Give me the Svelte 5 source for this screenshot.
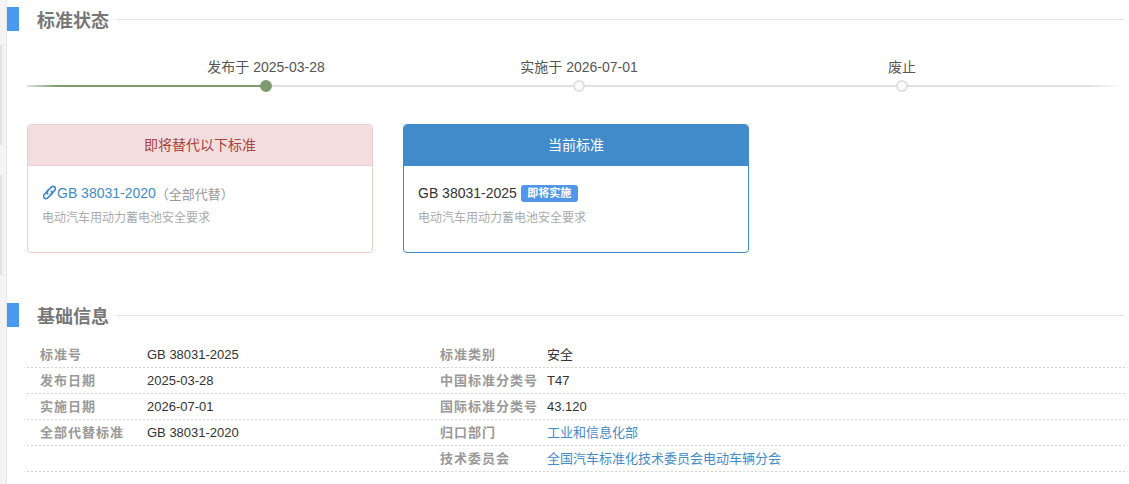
<script>
    // status timeline
    const steps = [
        { label: '发布于 2025-03-28', done: true },
        { label: '实施于 2026-07-01', done: false },
        { label: '废止', done: false }
    ];

    const infoRows = [
        { a: '标准号', b: 'GB 38031-2025', c: '标准类别', d: '安全' },
        { a: '发布日期', b: '2025-03-28', c: '中国标准分类号', d: 'T47' },
        { a: '实施日期', b: '2026-07-01', c: '国际标准分类号', d: '43.120' },
        { a: '全部代替标准', b: 'GB 38031-2020', c: '归口部门', d: '工业和信息化部', link: true },
        { a: '', b: '', c: '技术委员会', d: '全国汽车标准化技术委员会电动车辆分会', link: true }
    ];
</script>

<div class="page">
    <div class="rail"></div>
    <main class="content">
        <div class="section-title">
            <span class="mark"></span>
            <h2>标准状态</h2>
            <span class="rule"></span>
        </div>

        <div class="timeline">
            {#each steps as step}
                <div class="step">
                    <span class="step-label">{step.label}</span>
                    <span class="dot" class:done={step.done}></span>
                </div>
            {/each}
        </div>

        <div class="cards">
            <div class="card danger">
                <div class="card-head">即将替代以下标准</div>
                <div class="card-body">
                    <div class="card-line">
                        <svg class="link-icon" viewBox="1.6 1.2 12.8 13.6" width="13" height="15" fill="none" stroke="#428bca" stroke-width="1.7" stroke-linecap="round">
                            <path d="M6.5 6.2 2.8 10a2.4 2.4 0 0 0 3.4 3.4L9.8 9.8a2.4 2.4 0 0 0 0-3.2" />
                            <path d="M9.5 9.8 13.2 6a2.4 2.4 0 0 0-3.4-3.4L6.2 6.2a2.4 2.4 0 0 0 0 3.2" />
                        </svg><a class="std-link">GB 38031-2020</a><span class="note">（全部代替）</span>
                    </div>
                    <div class="card-desc">电动汽车用动力蓄电池安全要求</div>
                </div>
            </div>

            <div class="card primary">
                <div class="card-head">当前标准</div>
                <div class="card-body">
                    <div class="card-line">
                        GB 38031-2025 <span class="badge">即将实施</span>
                    </div>
                    <div class="card-desc">电动汽车用动力蓄电池安全要求</div>
                </div>
            </div>
        </div>

        <div class="section-title second">
            <span class="mark"></span>
            <h2>基础信息</h2>
            <span class="rule"></span>
        </div>

        <div class="info">
            {#each infoRows as row}
                <div class="info-row">
                    <span class="info-label">{row.a}</span>
                    <span class="info-value">{row.b}</span>
                    <span class="info-label">{row.c}</span>
                    <span class="info-value" class:blue={row.link}>{row.d}</span>
                </div>
            {/each}
        </div>
    </main>
</div>

<style>
    :global(body) {
        margin: 0;
        background: #fff;
        font-family: "Liberation Sans", Arial, "Noto Sans CJK SC", sans-serif;
        font-size: 14px;
        color: #333;
    }

    .page {
        display: flex;
        height: 484px;
        overflow: hidden;
    }

    /* sidebar edge with the shadows of the cards behind it */
    .rail {
        flex: none;
        width: 7px;
        box-sizing: border-box;
        border-right: 1px solid #e6e6e6;
        background:
            linear-gradient(90deg, #dcdcdc, #f4f4f4) 0 45px / 3px 100px no-repeat,
            linear-gradient(90deg, #dcdcdc, #f4f4f4) 0 175px / 3px 100px no-repeat,
            #f4f4f4;
    }

    .content {
        padding-top: 7px;
        width: 1118px;
    }

    .section-title {
        display: flex;
        align-items: center;
        height: 24px;
    }

    .section-title.second {
        margin-top: 50px;
    }

    .mark {
        width: 12px;
        height: 24px;
        background: #4a9bf0;
    }

    h2 {
        margin: 0 8px 0 18px;
        padding-top: 4px;
        font-size: 18px;
        line-height: 24px;
        font-weight: 700;
        color: #777;
    }

    .rule {
        flex: 1;
        height: 1px;
        background: #e5e5e5;
    }

    .timeline {
        display: flex;
        margin: 26px 0 0 20px;
        width: 1098px;
        height: 38px;
        padding-left: 239px;
        box-sizing: border-box;
        gap: 313px;
        background:
            linear-gradient(90deg, transparent 0, #7d9b6f 30px, #7d9b6f 239px, transparent 239px) 0 28px / 100% 2px no-repeat,
            linear-gradient(90deg, #e0e0e0 0, #e0e0e0 1060px, transparent 100%) 0 28px / 100% 2px no-repeat;
    }

    .step {
        width: 0;
        display: flex;
        flex-direction: column;
        align-items: center;
    }

    .step:last-child {
        margin-left: 10px;
    }

    .step-label {
        white-space: nowrap;
        font-size: 14px;
        line-height: 20px;
        color: #555;
    }

    .dot {
        flex: none;
        width: 8px;
        height: 8px;
        margin-top: 3px;
        border: 2px solid #dfdfdf;
        border-radius: 50%;
        background: #fafafa;
    }

    .dot.done {
        border-color: #7d9b6f;
        background: #7d9b6f;
    }

    .cards {
        display: flex;
        gap: 30px;
        margin: 29px 0 0 20px;
    }

    .card {
        width: 346px;
        height: 129px;
        box-sizing: border-box;
        border: 1px solid;
        border-radius: 4px;
        overflow: hidden;
    }

    .card-head {
        height: 41px;
        line-height: 40px;
        text-align: center;
        font-size: 14px;
        box-sizing: border-box;
    }

    .danger {
        border-color: #ebccd1;
    }

    .danger .card-head {
        background: #f2dede;
        color: #a94442;
        border-bottom: 1px solid #ebccd1;
    }

    .primary {
        border-color: #428bca;
    }

    .primary .card-head {
        background: #428bca;
        color: #fff;
    }

    .card-body {
        padding: 17px 14px 0 14px;
    }

    .card-line {
        display: flex;
        align-items: center;
        height: 20px;
        white-space: pre;
        color: #333;
    }

    .link-icon {
        flex: none;
        margin: -1px 1px 0 1px;
    }

    .std-link {
        color: #428bca;
    }

    .note {
        color: #999;
        font-size: 13px;
    }

    .badge {
        padding: 0 6.5px;
        height: 17px;
        line-height: 17px;
        font-size: 11px;
        font-weight: 700;
        color: #fff;
        background: #5296ea;
        border-radius: 3px;
    }

    .card-desc {
        margin-top: 5px;
        font-size: 12px;
        line-height: 20px;
        color: #aaa;
    }

    .info {
        margin: 15px 0 0 20px;
        width: 1098px;
    }

    .info-row {
        display: grid;
        grid-template-columns: 120px 280px 120px 1fr;
        height: 26px;
        box-sizing: border-box;
        background: linear-gradient(90deg, #d2d2d2 50%, transparent 50%) 0 100% / 4px 1px repeat-x;
        line-height: 25px;
        font-size: 13px;
    }

    .info-label {
        padding-left: 13px;
        font-size: 13px;
        font-weight: 700;
        letter-spacing: 1px;
        color: #999;
        white-space: nowrap;
    }

    .info-value {
        color: #333;
    }

    .blue {
        color: #428bca;
    }
</style>
